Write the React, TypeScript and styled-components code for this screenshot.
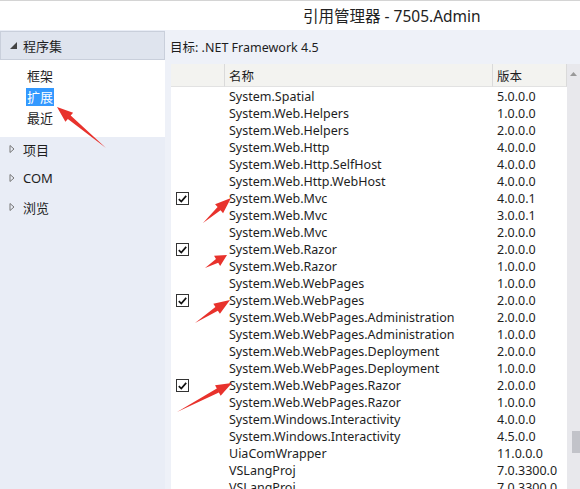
import styled, {createGlobalStyle} from 'styled-components'

const GlobalStyle = createGlobalStyle`
    html, body {
        margin: 0;
        padding: 0;
        background: #ffffff;
    }
    body {
        font-family: "Noto Sans", "Noto Sans CJK SC", sans-serif;
        font-size: 12.5px;
        color: #1e1e1e;
    }
`;

const Window = styled.div`
    width: 580px;
    height: 489px;
    display: flex;
    flex-direction: column;
    overflow: hidden;
    position: relative;
    background: #e9edf6;
`;

const TitleBar = styled.div`
    height: 30px;
    flex-shrink: 0;
    background: #ffffff;
    border-top: 1px solid #d4d4d4;
    box-sizing: border-box;
    padding-left: 303px;
    display: flex;
    align-items: center;
    font-size: 15.5px;
    color: #222;
`;

const Body = styled.div`
    flex: 1;
    display: flex;
    min-height: 0;
`;

const LeftPanel = styled.div`
    width: 165px;
    flex-shrink: 0;
    display: flex;
    flex-direction: column;
    background: #e9edf6;
`;

const GroupHeader = styled.div`
    height: 29px;
    box-sizing: border-box;
    margin-top: 1px;
    background: #dfe4ee;
    border: 1px solid #c9cfdb;
    display: flex;
    align-items: center;
    gap: 6px;
    padding-left: 9px;
    font-size: 13px;
`;

const SubList = styled.div`
    background: #ffffff;
    height: 77px;
    padding: 7px 0 0 26px;
    box-sizing: border-box;
    display: flex;
    flex-direction: column;
    align-items: flex-start;
    gap: 3px;
    font-size: 13px;
`;

const SubItem = styled.div<{ $active?: boolean }>`
    line-height: 18px;
    padding: 0 1px;
    background: ${p => p.$active ? '#3399ff' : 'transparent'};
    color: ${p => p.$active ? '#ffffff' : '#1e1e1e'};
`;

const NavList = styled.div`
    display: flex;
    flex-direction: column;
    padding: 3px 0 0 9px;
    gap: 11px;
    font-size: 13px;
`;

const NavItem = styled.div`
    display: flex;
    align-items: center;
    gap: 8px;
    height: 18px;
`;

const RightPanel = styled.div`
    flex: 1;
    display: flex;
    flex-direction: column;
    background: #eef1f8;
    min-width: 0;
`;

const TargetBar = styled.div`
    height: 34px;
    flex-shrink: 0;
    display: flex;
    align-items: center;
    padding-left: 5px;
    padding-bottom: 2px;
    box-sizing: border-box;
    font-size: 12.5px;
`;

const TableWrap = styled.div`
    flex: 1;
    display: flex;
    padding-left: 6px;
    min-height: 0;
`;

const Table = styled.div`
    flex: 1;
    background: #ffffff;
    display: flex;
    flex-direction: column;
    min-width: 0;
`;

const Grid = styled.div`
    display: grid;
    grid-template-columns: 54px 268px 74px;
`;

const HeaderCell = styled.div`
    height: 23px;
    box-sizing: border-box;
    background: #f3f3f0;
    border-bottom: 1px solid #e2e2e2;
    border-right: 1px solid #dadada;
    padding-left: 4px;
    display: flex;
    align-items: center;
    font-size: 12.5px;
`;

const Rows = styled.div`
    padding-top: 1px;
`;

const Row = styled.div`
    display: grid;
    grid-template-columns: 54px 268px 74px;
    height: 17px;
    align-items: center;
`;

const CheckCell = styled.div`
    padding-left: 5px;
    display: flex;
    align-items: center;
`;

const Box = styled.div`
    width: 13px;
    height: 13px;
    box-sizing: border-box;
    border: 1px solid #333;
    background: #fff;
    display: flex;
    align-items: center;
    justify-content: center;
`;

const NameCell = styled.div`
    padding-left: 4px;
    white-space: nowrap;
`;

const VersionCell = styled.div`
    padding-left: 4px;
    white-space: nowrap;
`;

const ScrollBar = styled.div`
    width: 13px;
    flex-shrink: 0;
    background: #e8e8ec;
    display: flex;
    flex-direction: column;
    align-items: center;
`;

const ScrollArrow = styled.div`
    margin-top: 5px;
    height: 10px;
    display: flex;
    align-items: center;
`;

const ScrollSpace = styled.div`
    height: 352px;
`;

const Thumb = styled.div`
    width: 8px;
    margin-left: 5px;
    height: 22px;
    background: #c2c3c9;
`;

const Overlay = styled.svg`
    position: absolute;
    left: 0;
    top: 0;
    pointer-events: none;
`;

const rows: [string, string, boolean][] = [
    ['System.Spatial', '5.0.0.0', false],
    ['System.Web.Helpers', '1.0.0.0', false],
    ['System.Web.Helpers', '2.0.0.0', false],
    ['System.Web.Http', '4.0.0.0', false],
    ['System.Web.Http.SelfHost', '4.0.0.0', false],
    ['System.Web.Http.WebHost', '4.0.0.0', false],
    ['System.Web.Mvc', '4.0.0.1', true],
    ['System.Web.Mvc', '3.0.0.1', false],
    ['System.Web.Mvc', '2.0.0.0', false],
    ['System.Web.Razor', '2.0.0.0', true],
    ['System.Web.Razor', '1.0.0.0', false],
    ['System.Web.WebPages', '1.0.0.0', false],
    ['System.Web.WebPages', '2.0.0.0', true],
    ['System.Web.WebPages.Administration', '2.0.0.0', false],
    ['System.Web.WebPages.Administration', '1.0.0.0', false],
    ['System.Web.WebPages.Deployment', '2.0.0.0', false],
    ['System.Web.WebPages.Deployment', '1.0.0.0', false],
    ['System.Web.WebPages.Razor', '2.0.0.0', true],
    ['System.Web.WebPages.Razor', '1.0.0.0', false],
    ['System.Windows.Interactivity', '4.0.0.0', false],
    ['System.Windows.Interactivity', '4.5.0.0', false],
    ['UiaComWrapper', '11.0.0.0', false],
    ['VSLangProj', '7.0.3300.0', false],
    ['VSLangProj', '7.0.3300.0', false],
];

// red annotation arrows: tail -> head
const arrows: [number, number, number, number][] = [
    [106, 148, 57, 107],
    [203, 223, 231, 198],
    [205, 268, 227, 255],
    [195, 323, 230, 300],
    [177, 412, 232, 383],
];

function Arrow({x1, y1, x2, y2}: { x1: number, y1: number, x2: number, y2: number }) {
    const dx = x2 - x1, dy = y2 - y1;
    const len = Math.hypot(dx, dy);
    const ux = dx / len, uy = dy / len;
    const px = -uy, py = ux;
    const headLen = Math.min(16, len * 0.45);
    const bx = x2 - ux * headLen, by = y2 - uy * headLen;
    const hw = 6, sw = 2.2;
    const pts = [
        [x1, y1],
        [bx + px * sw, by + py * sw],
        [bx + px * hw, by + py * hw],
        [x2, y2],
        [bx - px * hw, by - py * hw],
        [bx - px * sw, by - py * sw],
    ].map(p => p.join(',')).join(' ');
    return <polygon points={pts} fill="#e8322c"/>;
}

function Check() {
    return (
        <svg width="9" height="8" viewBox="0 0 9 8">
            <path d="M0.8 4.2 L3.3 6.6 L8.2 0.9" fill="none" stroke="#111" strokeWidth="1.7"/>
        </svg>
    );
}

function Collapsed() {
    return (
        <svg width="6" height="8" viewBox="0 0 6 8">
            <path d="M1 0.5 L5 4 L1 7.5 Z" fill="none" stroke="#777" strokeWidth="1"/>
        </svg>
    );
}

export default function App() {
    return (
        <Window>
            <GlobalStyle/>
            <TitleBar>引用管理器 - 7505.Admin</TitleBar>
            <Body>
                <LeftPanel>
                    <GroupHeader>
                        <svg width="7" height="7" viewBox="0 0 7 7">
                            <path d="M7 0 L7 7 L0 7 Z" fill="#444"/>
                        </svg>
                        程序集
                    </GroupHeader>
                    <SubList>
                        <SubItem>框架</SubItem>
                        <SubItem $active>扩展</SubItem>
                        <SubItem>最近</SubItem>
                    </SubList>
                    <NavList>
                        <NavItem><Collapsed/>项目</NavItem>
                        <NavItem><Collapsed/>COM</NavItem>
                        <NavItem><Collapsed/>浏览</NavItem>
                    </NavList>
                </LeftPanel>
                <RightPanel>
                    <TargetBar>目标: .NET Framework 4.5</TargetBar>
                    <TableWrap>
                        <Table>
                            <Grid>
                                <HeaderCell/>
                                <HeaderCell>名称</HeaderCell>
                                <HeaderCell>版本</HeaderCell>
                            </Grid>
                            <Rows>
                                {rows.map(([name, version, checked], i) => (
                                    <Row key={i}>
                                        <CheckCell>{checked && <Box><Check/></Box>}</CheckCell>
                                        <NameCell>{name}</NameCell>
                                        <VersionCell>{version}</VersionCell>
                                    </Row>
                                ))}
                            </Rows>
                        </Table>
                        <ScrollBar>
                            <ScrollArrow>
                                <svg width="7" height="4" viewBox="0 0 7 4">
                                    <path d="M0 4 L3.5 0 L7 4 Z" fill="#999"/>
                                </svg>
                            </ScrollArrow>
                            <ScrollSpace/>
                            <Thumb/>
                        </ScrollBar>
                    </TableWrap>
                </RightPanel>
            </Body>
            <Overlay width="580" height="489">
                {arrows.map(([x1, y1, x2, y2], i) => (
                    <Arrow key={i} x1={x1} y1={y1} x2={x2} y2={y2}/>
                ))}
            </Overlay>
        </Window>
    )
}
